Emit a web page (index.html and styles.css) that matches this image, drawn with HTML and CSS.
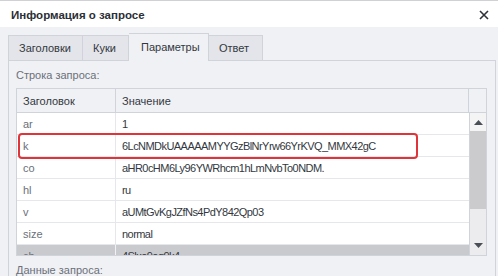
FILE: index.html
```html
<!DOCTYPE html>
<html lang="ru">
<head>
<meta charset="utf-8">
<link rel="stylesheet" href="styles.css">
</head>
<body>
<div class="window">
  <div class="titlebar">
    <span class="title">Информация о запросе</span>
    <svg class="close" width="10" height="10" viewBox="0 0 10 10"><path d="M1 1L9 9M9 1L1 9" stroke="#2d3138" stroke-width="1.6"/></svg>
  </div>
  <div class="body">
    <div class="tabs">
      <div class="tab">Заголовки</div>
      <div class="tab">Куки</div>
      <div class="tab active">Параметры</div>
      <div class="tab">Ответ</div>
    </div>
    <div class="panel">
      <div class="label">Строка запроса:</div>
      <div class="table">
        <div class="thead">
          <div class="th">Заголовок</div>
          <div class="th">Значение</div>
          <div class="th"></div>
        </div>
        <div class="tbody">
          <div class="rows">
            <div class="row"><div class="c1">ar</div><div class="c2">1</div></div>
            <div class="row"><div class="c1">k</div><div class="c2">6LcNMDkUAAAAAMYYGzBlNrYrw66YrKVQ_MMX42gC</div></div>
            <div class="row"><div class="c1">co</div><div class="c2">aHR0cHM6Ly96YWRhcm1hLmNvbTo0NDM.</div></div>
            <div class="row"><div class="c1">hl</div><div class="c2">ru</div></div>
            <div class="row"><div class="c1">v</div><div class="c2">aUMtGvKgJZfNs4PdY842Qp03</div></div>
            <div class="row"><div class="c1">size</div><div class="c2">normal</div></div>
            <div class="row sel"><div class="c1">cb</div><div class="c2">4Slxo9oq9k4</div></div>
          </div>
          <div class="scroll">
            <div class="sbtn"><svg width="9" height="5" viewBox="0 0 9 5"><path d="M0 5L4.5 0L9 5Z" fill="#4a4e55"/></svg></div>
            <div class="thumb"></div>
            <div class="track"><svg width="9" height="5" viewBox="0 0 9 5"><path d="M0 0L4.5 5L9 0Z" fill="#4a4e55"/></svg></div>
          </div>
        </div>
        <div class="mark"></div>
      </div>
      <div class="label label2">Данные запроса:</div>
    </div>
  </div>
</div>
</body>
</html>
```
FILE: styles.css
```css
* { box-sizing: border-box; }
html, body { margin: 0; padding: 0; }
body {
  width: 498px;
  height: 276px;
  overflow: hidden;
  font-family: "Liberation Sans", Arial, sans-serif;
  font-size: 11px;
  color: #333840;
  background: #f0f1f5;
}
.window {
  width: 498px;
  height: 276px;
  border-top: 1px solid #cfd1d5;
  overflow: hidden;
}
.titlebar {
  height: 26px;
  background: #ffffff;
  display: flex;
  align-items: center;
  justify-content: space-between;
  padding: 0 9px 0 11px;
}
.title {
  font-weight: bold;
  font-size: 11.5px;
  color: #2b2f36;
  padding-top: 1px;
}
.close { margin-top: 2px; }
.body {
  background: #f0f1f5;
  padding: 8px 2px 0 8px;
}
.tabs {
  display: flex;
  align-items: flex-end;
  height: 25px;
  position: relative;
  z-index: 1;
}
.tab {
  height: 25px;
  padding: 0 10px;
  display: flex;
  align-items: center;
  background: #e3e5ea;
  border: 1px solid #d0d3d9;
  border-bottom: none;
  border-left: none;
  color: #333840;
}
.tab:first-child { border-left: 1px solid #d0d3d9; width: 75px; }
.tab:nth-child(2) { width: 46px; }
.tab:nth-child(4) { width: 54px; }
.tab.active {
  background: #f0f1f5;
  height: 28px;
  width: 80px;
  margin-bottom: -1px;
  padding-bottom: 1px;
  padding-left: 12px;
}
.panel {
  border: 1px solid #d0d3d9;
  background: #f0f1f5;
  padding: 6px 8px 0 7px;
  height: 240px;
}
.label {
  color: #6b7079;
  height: 21px;
  line-height: 16px;
}
.label2 { margin-top: 6px; }
.table {
  position: relative;
  border: 1px solid #d0d3d9;
  height: 168px;
  overflow: hidden;
  background: #fff;
}
.thead {
  display: grid;
  grid-template-columns: 99px 353px 1fr;
  height: 24px;
  background: #f0f1f5;
  border-bottom: 1px solid #d0d3d9;
}
.th {
  display: flex;
  align-items: center;
  padding-left: 6px;
  border-right: 1px solid #d0d3d9;
}
.th:last-child { border-right: none; }
.tbody {
  display: flex;
  height: 142px;
}
.rows {
  width: 452px;
  overflow: hidden;
}
.row {
  display: grid;
  grid-template-columns: 99px 353px;
  height: 22px;
  border-bottom: 1px solid #e6e7ea;
  background: #fff;
}
.row.sel { background: #c9cace; }
.c1, .c2 {
  display: flex;
  align-items: center;
  padding-left: 6px;
  white-space: nowrap;
  overflow: hidden;
}
.c1 { border-right: 1px solid #e6e7ea; color: #6b7079; }
.c2 { letter-spacing: -0.55px; }
.row.sel .c1 { border-right-color: #f0f1f5; }
.scroll {
  width: 17px;
  border-left: 1px solid #d0d3d9;
  display: flex;
  flex-direction: column;
}
.sbtn {
  height: 18px;
  background: #f4f4f5;
  display: flex;
  align-items: center;
  justify-content: center;
}
.thumb {
  height: 78px;
  background: #cbcbcd;
}
.track {
  flex: 1;
  background: #ececee;
  display: flex;
  align-items: flex-end;
  justify-content: center;
  padding-bottom: 7px;
}
.mark {
  position: absolute;
  left: 1px;
  top: 44px;
  width: 400px;
  height: 26px;
  border: 2px solid #e0343b;
  border-radius: 4px;
}
```
